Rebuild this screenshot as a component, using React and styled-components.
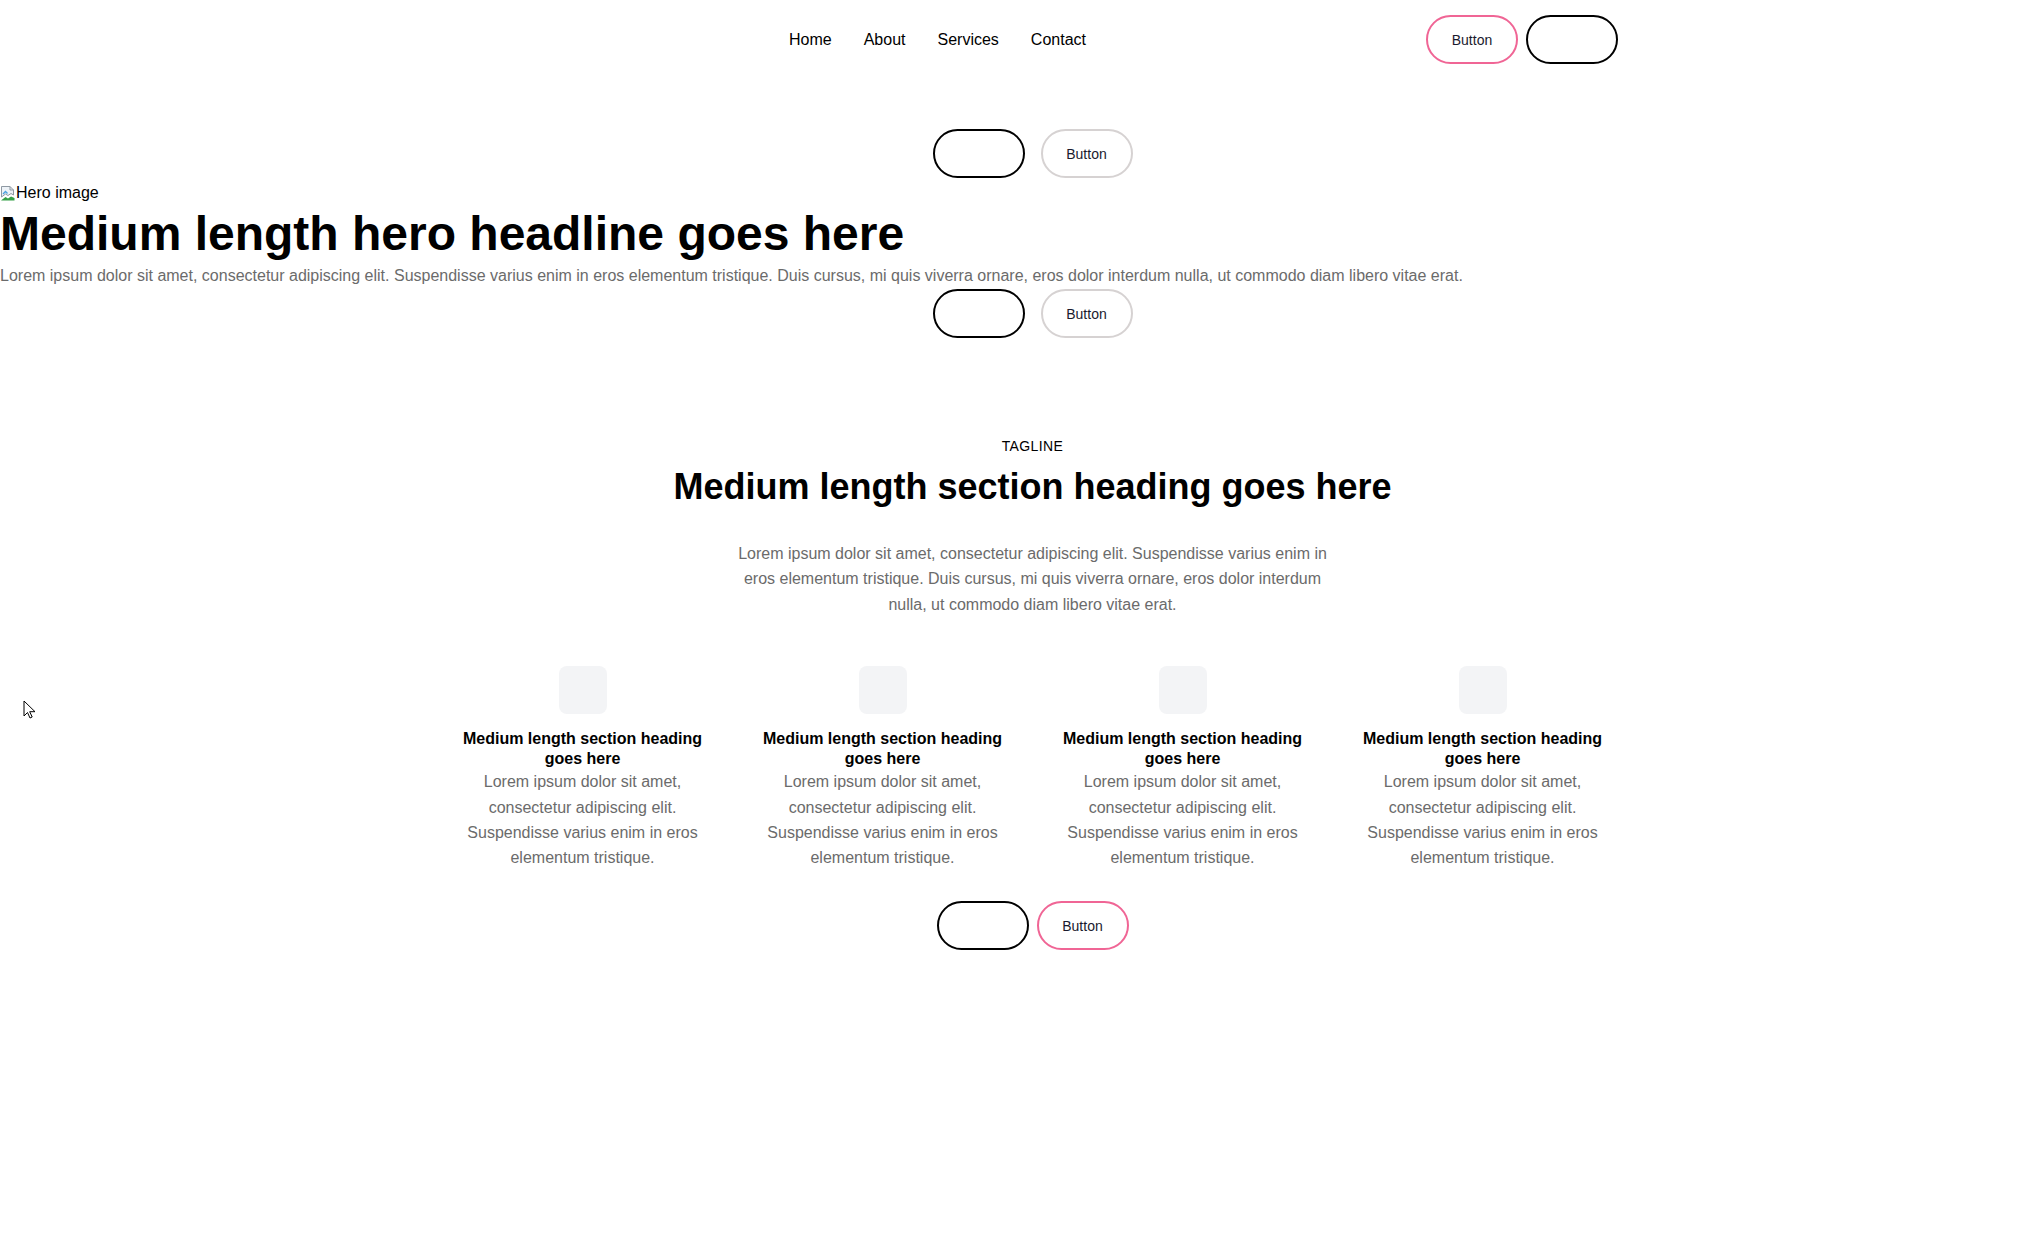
import React from "react";
import styled, { createGlobalStyle } from "styled-components";

const GlobalStyle = createGlobalStyle`
  body {
    margin: 0;
    font-family: "Liberation Sans", Arial, sans-serif;
    color: #000;
    background: #fff;
  }
  * {
    box-sizing: border-box;
  }
`;

const Page = styled.div`
  position: relative;
  min-height: 1241px;
`;

const Header = styled.header`
  display: flex;
  align-items: center;
  justify-content: space-between;
  max-width: 1216px;
  height: 79px;
  margin: 0 auto;
`;

const Logo = styled.div`
  width: 47px;
  height: 20px;
`;

const NavLinks = styled.nav`
  display: flex;
  gap: 32px;
`;

const NavLink = styled.a`
  font-size: 16px;
  color: #000;
  text-decoration: none;
`;

const Button = styled.button`
  display: flex;
  align-items: center;
  justify-content: center;
  width: 92px;
  height: 49px;
  padding: 0;
  border-radius: 999px;
  border: 2px solid ${(p) => p.$border || "#000"};
  background: #fff;
  font-family: inherit;
  font-size: 14px;
  color: #1a1a2e;
`;

const ButtonRow = styled.div`
  display: flex;
  justify-content: center;
  gap: ${(p) => p.$gap || 16}px;
  padding-left: ${(p) => (p.$offset ? 45 : 0)}px;
`;

const Hero = styled.section`
  padding-top: 50px;
`;

const BrokenImage = styled.div`
  display: flex;
  align-items: center;
  height: 18px;
  margin-top: 6px;
  font-size: 16px;
  color: #000;
`;

const Headline = styled.h1`
  margin: 1px 0 0;
  font-size: 48px;
  font-weight: 700;
  line-height: 1.3;
`;

const HeroText = styled.p`
  margin: 0 0 2px;
  font-size: 16px;
  line-height: 22px;
  color: #6b6b6b;
`;

const Features = styled.section`
  display: flex;
  flex-direction: column;
  align-items: center;
  padding: 98px 0 0 45px;
`;

const Tagline = styled.div`
  font-size: 14px;
  letter-spacing: 0.4px;
  line-height: 1.5;
  margin-bottom: 8px;
`;

const SectionHeading = styled.h2`
  margin: 0 0 32px;
  font-size: 36px;
  font-weight: 700;
  line-height: 1.2;
  text-align: center;
`;

const SectionText = styled.p`
  margin: 0 0 49px;
  max-width: 600px;
  font-size: 16px;
  line-height: 1.6;
  color: #6b6b6b;
  text-align: center;
`;

const Grid = styled.div`
  display: grid;
  grid-template-columns: repeat(4, 268px);
  gap: 32px;
  margin-bottom: 31px;
`;

const Card = styled.div`
  display: flex;
  flex-direction: column;
  align-items: center;
  text-align: center;
`;

const IconBox = styled.div`
  width: 48px;
  height: 48px;
  border-radius: 8px;
  background: #f3f4f6;
  margin-bottom: 15px;
`;

const CardHeading = styled.h3`
  margin: 0;
  font-size: 16px;
  font-weight: 700;
  line-height: 1.25;
`;

const CardText = styled.p`
  margin: 0;
  font-size: 16px;
  line-height: 25.2px;
  color: #6b6b6b;
`;

const Cursor = styled.svg`
  position: absolute;
  left: 23px;
  top: 700px;
`;

const BrokenIcon = () => (
  <svg width="16" height="16" viewBox="0 0 16 16">
    <path d="M1.5 1.5h8.5l3.5 3.5v5l-2.5-1.5-3 2-2.5-1.5-4 3z" fill="#eef3f8" stroke="#8f99a3" strokeWidth="1" />
    <path d="M10 1.5v3.5h3.5" fill="none" stroke="#8f99a3" strokeWidth="1" />
    <path d="M3 9l2.5-2.5 2 2" fill="none" stroke="#4a9fe0" strokeWidth="1.4" />
    <path d="M1 15.5l4.5-3.5 2.5 1.5 3-2 3.5 1.5v2.5z" fill="#35a046" />
  </svg>
);

const features = [1, 2, 3, 4];

export default function App() {
  return (
    <Page>
      <GlobalStyle />
      <Header>
        <Logo />
        <NavLinks>
          <NavLink>Home</NavLink>
          <NavLink>About</NavLink>
          <NavLink>Services</NavLink>
          <NavLink>Contact</NavLink>
        </NavLinks>
        <ButtonRow $gap={8}>
          <Button $border="#f06595">Button</Button>
          <Button />
        </ButtonRow>
      </Header>

      <Hero>
        <ButtonRow $offset>
          <Button />
          <Button $border="#d6d2d2">Button</Button>
        </ButtonRow>
        <BrokenImage>
          <BrokenIcon />
          Hero image
        </BrokenImage>
        <Headline>Medium length hero headline goes here</Headline>
        <HeroText>
          Lorem ipsum dolor sit amet, consectetur adipiscing elit. Suspendisse varius enim in eros
          elementum tristique. Duis cursus, mi quis viverra ornare, eros dolor interdum nulla, ut
          commodo diam libero vitae erat.
        </HeroText>
        <ButtonRow $offset>
          <Button />
          <Button $border="#d6d2d2">Button</Button>
        </ButtonRow>
      </Hero>

      <Features>
        <Tagline>TAGLINE</Tagline>
        <SectionHeading>Medium length section heading goes here</SectionHeading>
        <SectionText>
          Lorem ipsum dolor sit amet, consectetur adipiscing elit. Suspendisse varius enim in eros
          elementum tristique. Duis cursus, mi quis viverra ornare, eros dolor interdum nulla, ut
          commodo diam libero vitae erat.
        </SectionText>
        <Grid>
          {features.map((f) => (
            <Card key={f}>
              <IconBox />
              <CardHeading>Medium length section heading goes here</CardHeading>
              <CardText>
                Lorem ipsum dolor sit amet, consectetur adipiscing elit. Suspendisse varius enim in
                eros elementum tristique.
              </CardText>
            </Card>
          ))}
        </Grid>
        <ButtonRow $gap={8}>
          <Button />
          <Button $border="#f06595">Button</Button>
        </ButtonRow>
      </Features>

      <Cursor width="13" height="20" viewBox="0 0 13 20">
        <path d="M1 1v15l3.5-3.5 2.5 5.5 2.2-1-2.5-5.3H12z" fill="#fff" stroke="#000" strokeWidth="1" />
      </Cursor>
    </Page>
  );
}
